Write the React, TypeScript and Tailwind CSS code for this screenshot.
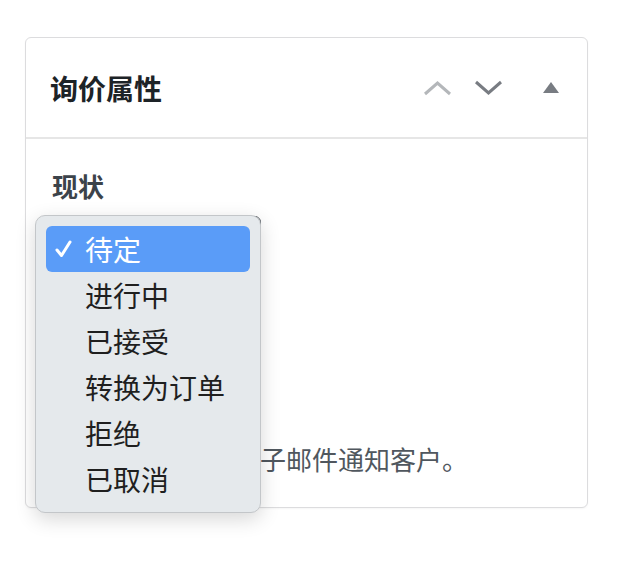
import React from "react";

const statuses = ["待定", "进行中", "已接受", "转换为订单", "拒绝", "已取消"];

const ChevronUp = () => (
  <svg width="29" height="16" viewBox="0 0 29 16" fill="none">
    <polyline points="2,14 14.5,3 27,14" stroke="#b4b7ba" strokeWidth="3" />
  </svg>
);

const ChevronDown = () => (
  <svg width="29" height="16" viewBox="0 0 29 16" fill="none">
    <polyline points="2,2 14.5,13 27,2" stroke="#787c82" strokeWidth="3" />
  </svg>
);

const Check = () => (
  <svg width="17" height="18" viewBox="0 0 17 18" fill="none">
    <polyline
      points="2,10 6.5,15.5 15,2"
      stroke="#ffffff"
      strokeWidth="3"
      strokeLinecap="round"
      strokeLinejoin="round"
    />
  </svg>
);

export default function App() {
  const selected = 0;

  return (
    <div
      className="relative min-h-[564px] w-[618px] bg-white pl-[25px] pt-[37px]"
      style={{ fontFamily: '"Noto Sans CJK SC", "Noto Sans", sans-serif' }}
    >
      {/* Postbox card */}
      <div className="flex h-[471px] w-[563px] flex-col rounded-[6px] border border-[#dcdcde] bg-white shadow-[0_1px_2px_rgba(0,0,0,0.04)]">
        <div className="flex h-[101px] items-center border-b-2 border-[#e6e6e6] pl-[24px] pr-[28px]">
          <h2 className="flex-1 text-[28px] font-bold leading-none text-[#1d2327]">
            询价属性
          </h2>
          <div className="flex items-center">
            <span className="mr-[22px] mt-[1px] flex">
              <ChevronUp />
            </span>
            <span className="mr-[40px] mt-[1px] flex">
              <ChevronDown />
            </span>
            <span className="h-0 w-0 border-x-[8px] border-b-[11px] border-x-transparent border-b-[#787c82]" />
          </div>
        </div>

        <div className="flex flex-col pl-[26px] pt-[34px]">
          <label className="text-[26px] font-bold leading-none text-[#3c434a]">
            现状
          </label>
          <div className="mt-[17px] h-[46px] w-[209px] rounded-[6px] border border-[#50575e] bg-white" />
          <p className="mt-[184px] text-[26px] leading-none text-[#50575e]">
            状态变更将通过电子邮件通知客户。
          </p>
        </div>
      </div>

      {/* Open select menu */}
      <div className="absolute left-[35px] top-[215px] w-[226px] rounded-[10px] border border-[#c3c6c9] bg-[#e5e9ec] px-[10px] pb-[10px] pt-[10px] shadow-[0_6px_20px_rgba(0,0,0,0.16)]">
        {statuses.map((s, i) => (
          <div
            key={s}
            className={`flex h-[46px] items-center rounded-[6px] pl-[9px] text-[28px] leading-none ${
              i === selected ? "bg-[#5a9cf8] text-white" : "text-[#1f1f1f]"
            }`}
          >
            <span className="flex w-[30px]">{i === selected && <Check />}</span>
            <span>{s}</span>
          </div>
        ))}
      </div>
    </div>
  );
}
